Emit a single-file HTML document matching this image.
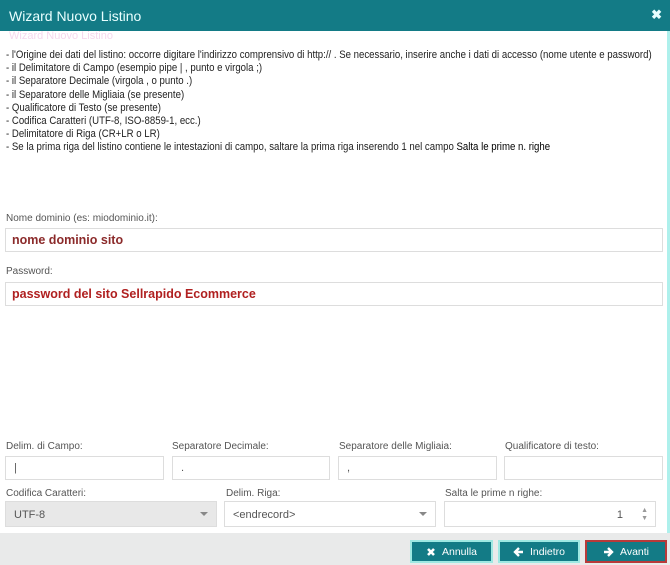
<!DOCTYPE html>
<html><head><style>
*{box-sizing:border-box;margin:0;padding:0}
body{width:670px;height:565px;background:#fff;font-family:"Liberation Sans",sans-serif;position:relative;overflow:hidden}
.hdr{position:absolute;left:0;top:0;width:670px;height:31px;background:#137b86;color:#e8ffff;font-size:14px;padding:8px 0 0 9px;z-index:2}
.hdr .x{position:absolute;right:8px;top:7px;font-size:13px;font-weight:bold}
.edge{position:absolute;right:0;top:31px;width:3px;height:502px;background:#aef0ec}
.info{position:absolute;left:6px;top:49px;font-size:11px;line-height:13.2px;color:#222;white-space:nowrap;transform:scaleX(0.875);transform-origin:0 0}
.lbl{position:absolute;font-size:10px;color:#555}
.in{position:absolute;border:1px solid #ddd;background:#fff;height:24px;font-size:11px;color:#555;padding:5px 8px}
.big{font-weight:bold;font-size:12.5px;color:#a33;padding:4px 6px}
.sel .ar{position:absolute;right:8px;top:10px;width:0;height:0;border-left:4px solid transparent;border-right:4px solid transparent;border-top:4px solid #888}
.ftr{position:absolute;left:0;top:533px;width:670px;height:32px;background:#e9eaea}
.btn{position:absolute;top:540px;height:23px;background:#137b86;color:#fff;font-size:10.5px;border:2px solid #9ee8e2;text-align:center;padding-top:4px}
.btn svg{vertical-align:-2px;margin-right:6px}
</style></head><body>
<div class="hdr">Wizard Nuovo Listino<span class="x">✖</span></div>
<div class="edge"></div>
<div style="position:absolute;left:9px;top:30px;font-size:11px;color:#f6d8ee">Wizard Nuovo Listino</div>
<div class="info">
- l'Origine dei dati del listino: occorre digitare l'indirizzo comprensivo di http:// . Se necessario, inserire anche i dati di accesso (nome utente e password)<br>
- il Delimitatore di Campo (esempio pipe | , punto e virgola ;)<br>
- il Separatore Decimale (virgola , o punto .)<br>
- il Separatore delle Migliaia (se presente)<br>
- Qualificatore di Testo (se presente)<br>
- Codifica Caratteri (UTF-8, ISO-8859-1, ecc.)<br>
- Delimitatore di Riga (CR+LR o LR)<br>
- Se la prima riga del listino contiene le intestazioni di campo, saltare la prima riga inserendo 1 nel campo <span style="color:#000">Salta le prime n. righe</span>
</div>
<div class="lbl" style="left:6px;top:213px">Nome dominio (es: miodominio.it):</div>
<div class="in big" style="left:5px;top:228px;width:658px;color:#8b2a2a">nome dominio sito</div>
<div class="lbl" style="left:6px;top:266px">Password:</div>
<div class="in big" style="left:5px;top:282px;width:658px;color:#b02020">password del sito Sellrapido Ecommerce</div>

<div class="lbl" style="left:6px;top:441px">Delim. di Campo:</div>
<div class="lbl" style="left:172px;top:441px">Separatore Decimale:</div>
<div class="lbl" style="left:339px;top:441px">Separatore delle Migliaia:</div>
<div class="lbl" style="left:505px;top:441px">Qualificatore di testo:</div>
<div class="in" style="left:5px;top:456px;width:159px">|</div>
<div class="in" style="left:172px;top:456px;width:158px">.</div>
<div class="in" style="left:338px;top:456px;width:159px">,</div>
<div class="in" style="left:504px;top:456px;width:159px"></div>

<div class="lbl" style="left:6px;top:488px">Codifica Caratteri:</div>
<div class="lbl" style="left:226px;top:488px">Delim. Riga:</div>
<div class="lbl" style="left:445px;top:488px">Salta le prime n righe:</div>
<div class="in sel" style="left:5px;top:501px;width:212px;height:26px;background:#e8e8e8;padding-top:7px">UTF-8<span class="ar"></span></div>
<div class="in sel" style="left:224px;top:501px;width:212px;height:26px;padding-top:7px">&lt;endrecord&gt;<span class="ar"></span></div>
<div class="in" style="left:444px;top:501px;width:212px;height:26px;text-align:right;padding:7px 32px 0 0">1<span style="position:absolute;right:7px;top:5px;font-size:7px;line-height:8px;color:#999">▲<br>▼</span></div>

<div class="ftr"></div>
<div class="btn" style="left:410px;width:83px"><svg width="10" height="10" viewBox="0 0 10 10"><path d="M2 2L8 8M8 2L2 8" stroke="#fff" stroke-width="2.6"/></svg>Annulla</div>
<div class="btn" style="left:498px;width:82px"><svg width="11" height="10" viewBox="0 0 11 10"><path d="M10 5H2M6 1L2 5L6 9" stroke="#fff" stroke-width="2.4" fill="none"/></svg>Indietro</div>
<div class="btn" style="left:585px;width:82px;border-color:#b83a3a"><svg width="11" height="10" viewBox="0 0 11 10"><path d="M1 5H9M5 1L9 5L5 9" stroke="#fff" stroke-width="2.4" fill="none"/></svg>Avanti</div>
</body></html>
